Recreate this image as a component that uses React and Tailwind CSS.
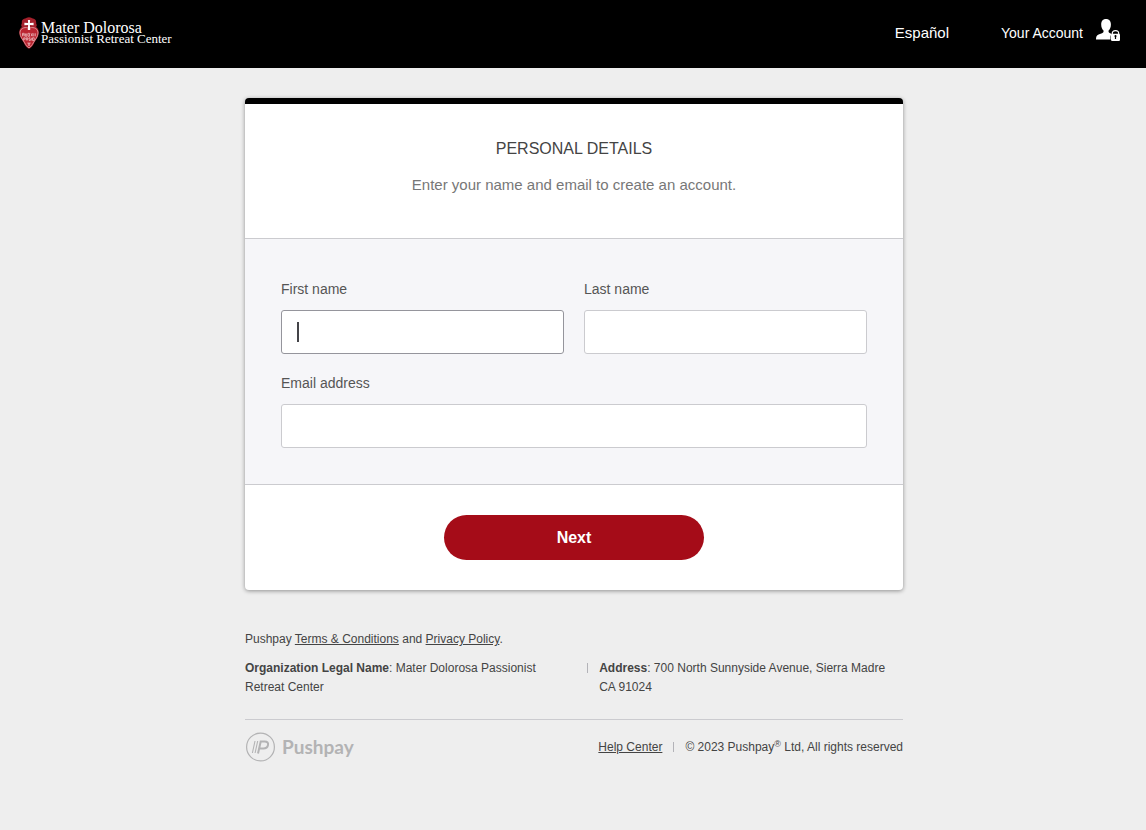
import { useState } from "react";

const INPUT_CLASS =
  "block w-full h-11 px-4 rounded-[3px] border bg-white text-base text-[#444444] focus:outline-none";

function Emblem() {
  return (
    <svg className="w-5 h-8 shrink-0" viewBox="0 0 20 32" aria-hidden="true">
      <path
        d="M10 .3c2 0 2.600.8 4 1.300 2 .6 3.200 1.600 3.200 3.400 0 1-.2 1.500.3 2.300.6 1.200.1 2-.5 2.700 2 1 2.700 3 2.700 5.500 0 4.500-3 7.500-4.700 10.800-1 2.200-2.800 4.900-5 5.400-2.200-.5-4-3.200-5-5.400C3.300 23 .3 20 .3 15.500.3 13 1 11 3 10c-.6-.7-1.100-1.500-.5-2.700.5-.8.300-1.300.300-2.300 0-1.800 1.200-2.800 3.200-3.400C7.400 1.100 8 .3 10 .3z"
        fill="#a3202b"
      />
      <path
        d="M10 11.500c2.500-2 9-1 9 4.300 0 4-2.900 6.700-4.700 10-1 2-2.600 4.300-4.300 5-1.700-.7-3.300-3-4.300-5C3.900 22.500 1 19.800 1 15.800c0-5.300 6.500-6.300 9-4.300z"
        fill="#bb2531"
        stroke="#e09a9e"
        strokeWidth=".9"
      />
      <path d="M8.900 3h2.200l-.2 3 3.700-.2v2.400L10.900 8l.3 5H8.800l.3-5-3.700.2V5.800l3.700.2z" fill="#fff" />
      <g fill="none" stroke="#f1c9cb" strokeWidth=".7">
        <path d="M3.500 19.300v-3h1.700v3M3.500 17.800h1.700M6.300 16.300v3h1.500M6.300 17.700h1.200M7.800 16.300v3M9 16.300h1.500v3H9zM12 16.300l1.700 3M13.700 16.300l-1.700 3M14.800 16.300v3M16.300 16.300v3" />
        <path d="M4.700 23.500v-2.700h1.500v1.400H4.700M7.300 23.500v-2.700h1.500v2.700M7.300 22.200h1.500M11.300 20.800H10v1.300h1.300v1.400H10M12.300 20.800v2.700M13.500 20.800h1.700v2.700h-1.700z" />
        <path d="M10 25.200v3M8.300 26l1.700 1 1.700-1M8.800 28.200h2.400" />
      </g>
    </svg>
  );
}

function AccountIcon() {
  return (
    <svg className="w-[26px] h-6" viewBox="0 0 26 24" aria-hidden="true">
      <path
        d="M11 1c3.200 0 4.900 2.200 4.900 5.500 0 2.700-.9 4.700-2.300 6.100-.3 1.400.2 2.100 1.500 2.600l1.800.8c-1 .8-1.400 1.800-1.400 3v2.500H1c0-2.900.6-4.400 2.600-5.100L7 15.200c1.300-.5 1.800-1.200 1.500-2.600C7.100 11.200 6.200 9.200 6.200 6.500 6.200 3.200 7.800 1 11 1z"
        fill="#fff"
      />
      <path d="M17.300 16v-.5c0-3.900 6.400-3.900 6.400 0v.5" fill="none" stroke="#fff" strokeWidth="1.200" />
      <rect x="16" y="15.800" width="9" height="7.200" rx="1.200" fill="#fff" />
      <path d="M20.500 17a1.100 1.100 0 0 1 .6 2v2h-1.200v-2a1.100 1.100 0 0 1 .6-2z" fill="#000" />
    </svg>
  );
}

function PushpayMark() {
  return (
    <svg className="w-[30px] h-[30px]" viewBox="0 0 30 30" fill="none" stroke="#b3b3b4" aria-hidden="true">
      <circle cx="15.500" cy="15" r="13.900" strokeWidth="1.200" />
      <path d="M10 9 7.400 21M12.700 9l-2.600 12" strokeWidth="1.100" />
      <path d="M13 21.500 15.700 9.600h4c2.700 0 3.800 1.300 3.300 3.400-.5 2.400-2.200 3.500-4.600 3.500h-3.800" strokeWidth="2" />
    </svg>
  );
}

function Field({ id, label, caret, ...props }) {
  return (
    <div>
      <label htmlFor={id} className="block mb-[11px] text-sm leading-5 text-[#555555]">
        {label}
      </label>
      <div className="relative">
        <input
          id={id}
          name={id}
          className={`${INPUT_CLASS} ${caret ? "border-[#95959c]" : "border-[#cbcbcf]"}`}
          {...props}
        />
        {caret && <span className="absolute left-4 top-3 w-0.5 h-5 bg-[#444448] pointer-events-none" />}
      </div>
    </div>
  );
}

export default function App() {
  const [form, setForm] = useState({ firstName: "", lastName: "", email: "" });

  const bind = (key) => ({
    value: form[key],
    onChange: (e) => setForm({ ...form, [key]: e.target.value }),
  });

  return (
    <div className="min-h-screen bg-[#eeeeee] font-['Liberation_Sans',Arial,sans-serif] text-[#444444]">
      <header className="flex items-center justify-between h-[68px] pb-0.5 pl-[19px] pr-[25px] bg-black text-white">
        <a href="#home" className="flex items-center gap-0.5 font-['Liberation_Serif',serif]">
          <Emblem />
          <span className="flex flex-col">
            <span className="text-base leading-3">Mater Dolorosa</span>
            <span className="text-[13px] leading-[10px]">Passionist Retreat Center</span>
          </span>
        </a>
        <nav className="flex items-center text-[15px]">
          <a href="#es" className="mr-[52px]">Español</a>
          <a href="#account" className="flex items-center gap-3 text-sm">
            Your Account
            <span className="pb-1.5">
              <AccountIcon />
            </span>
          </a>
        </nav>
      </header>

      <main className="w-full max-w-[660px] mx-auto pt-[30px] pl-0.5">
        <form
          onSubmit={(e) => e.preventDefault()}
          className="rounded-[4px] overflow-hidden bg-white border-t-6 border-black shadow-[0_1px_4px_rgba(0,0,0,0.4)]"
        >
          <div className="h-[134px] pt-[33px] text-center">
            <h1 className="text-base leading-6 uppercase">Personal Details</h1>
            <p className="mt-3 text-[15px] leading-6 text-[#777777]">
              Enter your name and email to create an account.
            </p>
          </div>

          <div className="px-9 pt-10 pb-9 bg-[#f6f6f9] border-y border-[#cbcbcf]">
            <div className="grid grid-cols-2 gap-5 mb-[19px]">
              <Field id="firstName" label="First name" type="text" caret {...bind("firstName")} />
              <Field id="lastName" label="Last name" type="text" {...bind("lastName")} />
            </div>
            <Field id="email" label="Email address" type="email" {...bind("email")} />
          </div>

          <div className="flex justify-center py-[30px]">
            <button type="submit" className="w-[260px] h-[45px] rounded-full bg-[#a50c18] text-white text-base font-bold">
              Next
            </button>
          </div>
        </form>

        <footer className="pt-10 pb-16 text-xs">
          <p className="leading-[19px]">
            Pushpay <a href="#terms" className="underline">Terms &amp; Conditions</a> and{" "}
            <a href="#privacy" className="underline">Privacy Policy</a>.
          </p>

          <div className="flex mt-[10px] leading-[19px]">
            <p className="w-[52%] pr-6">
              <strong>Organization Legal Name</strong>: Mater Dolorosa Passionist Retreat Center
            </p>
            <div className="flex flex-1 gap-[11px]">
              <span className="shrink-0 w-px h-[10px] mt-1 bg-[#b3b3b8]" />
              <p>
                <strong>Address</strong>: 700 North Sunnyside Avenue, Sierra Madre CA 91024
              </p>
            </div>
          </div>

          <div className="flex items-center justify-between mt-[22px] pt-3 border-t border-[#cbcbcf]">
            <a href="#pushpay" className="flex items-center gap-[7px] text-[#b3b3b4]">
              <PushpayMark />
              <span className="font-['Lato',sans-serif] font-bold text-[19px] leading-7">Pushpay</span>
            </a>
            <div className="flex items-center">
              <a href="#help" className="underline">Help Center</a>
              <span className="w-px h-[10px] mx-[11px] bg-[#b3b3b8]" />
              <span>
                © 2023 Pushpay<sup className="text-[9px]">®</sup> Ltd, All rights reserved
              </span>
            </div>
          </div>
        </footer>
      </main>
    </div>
  );
}
